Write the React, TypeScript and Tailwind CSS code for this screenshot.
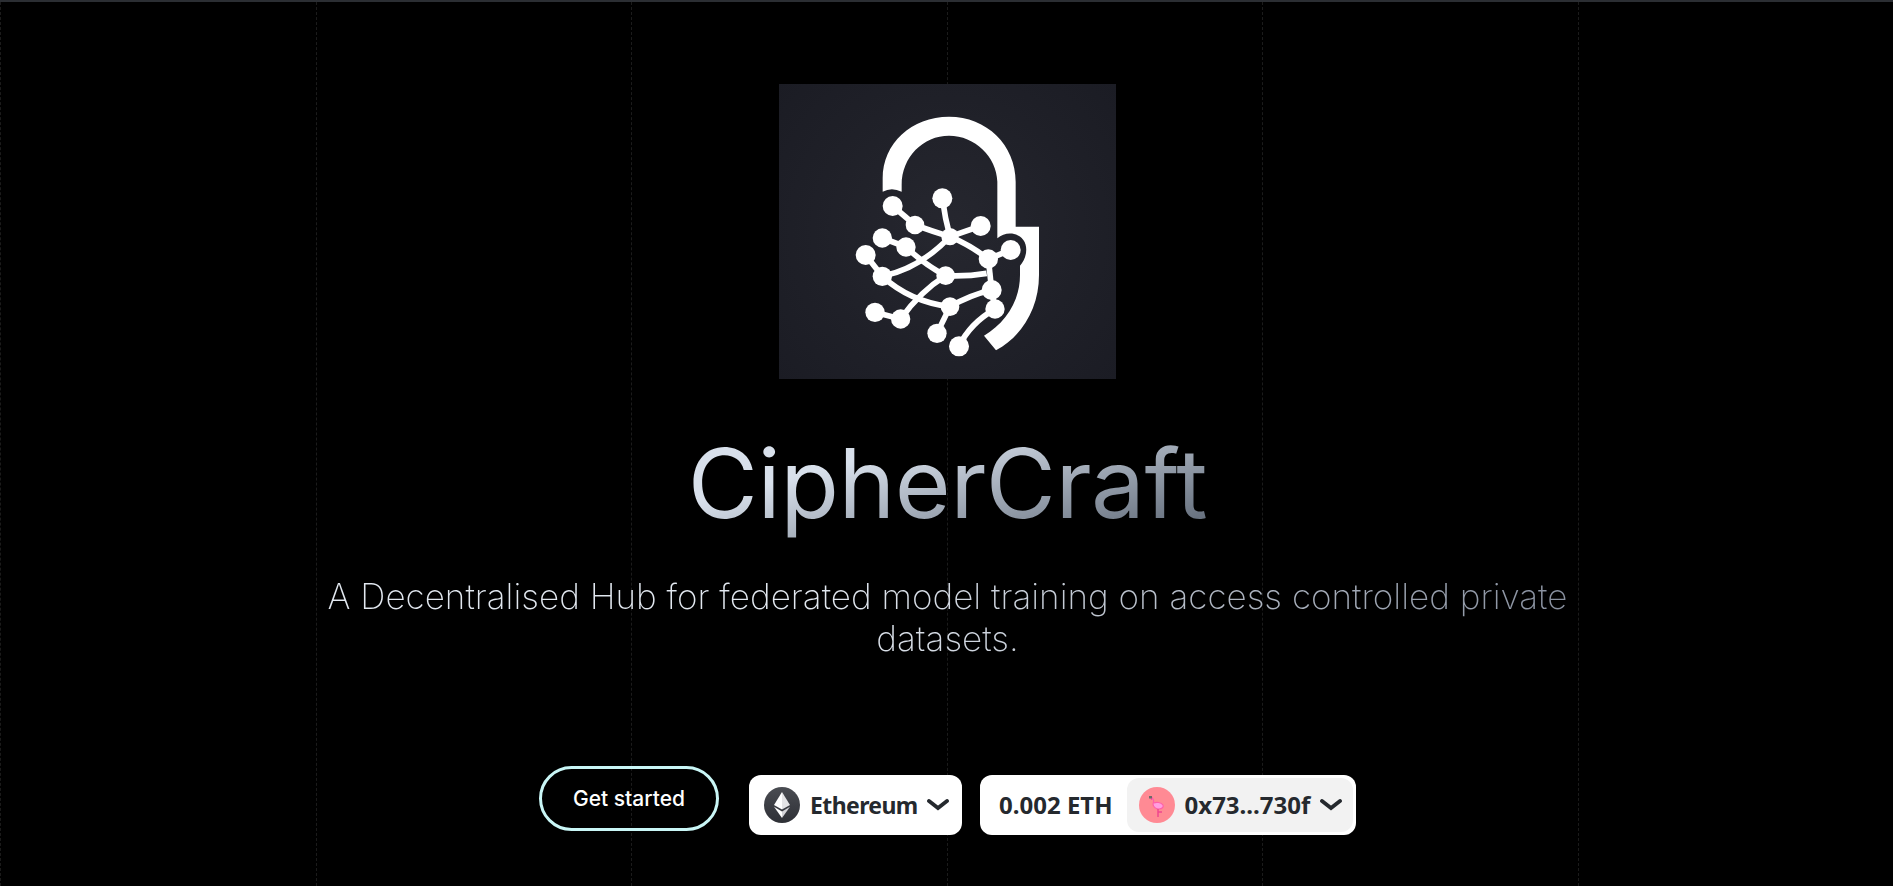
const nodes: [number, number, number][] = [
  [368, 393, 30], [517, 370, 30], [435, 450, 28], [632, 453, 30], [540, 485, 26],
  [337, 489, 29], [408, 516, 29], [722, 525, 30], [655, 552, 29], [287, 540, 30],
  [337, 604, 29], [527, 602, 28], [665, 645, 30], [675, 702, 29], [540, 695, 28],
  [315, 712, 29], [392, 732, 29], [501, 775, 29], [567, 814, 30],
];

const links = [
  'M368 393 L435 450',
  'M435 450 Q490 470 540 485',
  'M517 370 Q525 430 540 485',
  'M632 453 L540 485',
  'M337 489 L408 516',
  'M408 516 Q465 570 527 602',
  'M287 540 L337 604',
  'M337 604 Q450 580 540 485',
  'M540 485 Q600 510 655 552',
  'M655 552 L722 525',
  'M655 552 L665 645',
  'M527 602 Q590 605 650 595',
  'M527 602 Q450 650 392 732',
  'M337 604 Q420 680 540 695',
  'M540 695 Q600 660 665 645',
  'M540 695 L501 775',
  'M675 702 Q600 745 567 814',
  'M665 645 L675 702',
  'M315 712 L392 732',
];

function Logo() {
  return (
    <div className="h-[295px] w-[337px] bg-[radial-gradient(circle,#26272f_0%,#1f2028_60%,#1b1c24_100%)]">
      <svg viewBox="27 27 1011 885" className="h-full w-full">
        <path
          fill="#fff"
          d="M338 350 V310 C338 205 425 125 537 125 C650 125 737 210 737 320 V455 H807 V600 C807 700 755 785 678 826 L642 782 C705 745 750 680 750 600 V572 C770 550 775 515 760 495 C740 470 705 470 682 490 V320 C680 245 615 182 537 182 C460 182 395 245 395 330 V350 Q365 335 338 350 Z"
        />
        {links.map((d) => (
          <path key={d} d={d} fill="none" stroke="#fff" strokeWidth="17" />
        ))}
        {nodes.map(([x, y, r]) => (
          <circle key={`${x}-${y}`} cx={x} cy={y} r={r} fill="#fff" />
        ))}
      </svg>
    </div>
  );
}

function Chevron() {
  return (
    <svg viewBox="0 0 22 12" className="h-3 w-[22px] shrink-0" fill="none">
      <path d="M2 2 L11 9 L20 2" stroke="#25292e" strokeWidth="3.8" strokeLinecap="round" />
    </svg>
  );
}

function EthIcon() {
  return (
    <svg viewBox="0 0 36 36" className="h-9 w-9 shrink-0">
      <defs>
        <linearGradient id="eth" x1="0" y1="0" x2="0" y2="1">
          <stop offset="0" stopColor="#4a4c52" />
          <stop offset="1" stopColor="#2e3036" />
        </linearGradient>
      </defs>
      <circle cx="18" cy="18" r="18" fill="url(#eth)" />
      <path d="M18 5 L10 18 L18 22.4 Z" fill="#fff" />
      <path d="M18 5 L26 18 L18 22.4 Z" fill="#e4e4e6" />
      <path d="M10 19.8 L18 31 L18 24.4 Z" fill="#fff" />
      <path d="M26 19.8 L18 31 L18 24.4 Z" fill="#d4d4d8" />
    </svg>
  );
}

function Flamingo() {
  return (
    <div className="flex h-9 w-9 shrink-0 items-center justify-center rounded-full bg-[#ff8a94]">
      <svg viewBox="0 0 36 36" className="h-9 w-9">
        <path d="M13 13 C13 10 11 9 11 11" fill="none" stroke="#ff4f9a" strokeWidth="2" />
        <rect x="10" y="9" width="3" height="2.5" fill="#6b6b6b" />
        <path d="M13 11 C15 12 15 15 14 17 C14 20 17 22 20 22 C23 22 25 20 24 18 C22 15 17 15 15 16" fill="#ff9ee0" stroke="#ff5fa8" strokeWidth="1.2" />
        <path d="M19 22 V30 M19 25 H23" stroke="#f0478f" strokeWidth="1.5" fill="none" />
      </svg>
    </div>
  );
}

export default function App() {
  return (
    <div className="relative h-screen overflow-hidden border-t-2 border-[#2b2e33] bg-black font-['Inter',sans-serif]">
      <div className="pointer-events-none absolute inset-0 grid grid-cols-6">
        {[0, 1, 2, 3, 4, 5].map((i) => (
          <div key={i} className="border-l border-dashed border-[#1b1b1b]" />
        ))}
      </div>

      <main className="relative flex flex-col items-center pl-[2px] pt-[82px]">
        <Logo />

        <h1 className="mt-[44px] bg-gradient-to-br from-[#d8e0eb] from-30% to-[#4b5563] bg-clip-text pb-4 text-[96px] font-normal leading-[1.25] tracking-[-0.5px] text-transparent">
          CipherCraft
        </h1>

        <p className="mt-[16px] w-[1290px] bg-gradient-to-r from-[#e2e8f0] from-40% to-[#858d9c] bg-clip-text text-center text-[35px] font-extralight leading-[42px] text-transparent">
          A Decentralised Hub for federated model training on access controlled private datasets.
        </p>

        <div className="mt-[107px] flex items-start">
          <button className="mr-[30px] h-[65px] w-[180px] rounded-full border-[3px] border-[#c9f6f6] text-[21px] font-medium text-white">
            Get started
          </button>

          <div className="mt-[9px] flex h-[60px] w-[213px] items-center gap-[9px] rounded-xl bg-white pl-[15px] font-['Noto_Sans',sans-serif] text-[23px] font-bold tracking-[-0.6px] text-[#25292e]">
            <EthIcon />
            <span className="ml-px">Ethereum</span>
            <Chevron />
          </div>

          <div className="ml-[18px] mt-[9px] flex h-[60px] w-[376px] items-center rounded-xl bg-white p-[3px] font-['Noto_Sans',sans-serif] text-[24px] font-bold text-[#25292e]">
            <span className="pl-[16px] pr-[14px]">0.002 ETH</span>
            <div className="flex h-[54px] flex-1 items-center gap-[10px] rounded-xl bg-[#f2f2f2] pl-[12px]">
              <Flamingo />
              <span>0x73...730f</span>
              <Chevron />
            </div>
          </div>
        </div>
      </main>
    </div>
  );
}
